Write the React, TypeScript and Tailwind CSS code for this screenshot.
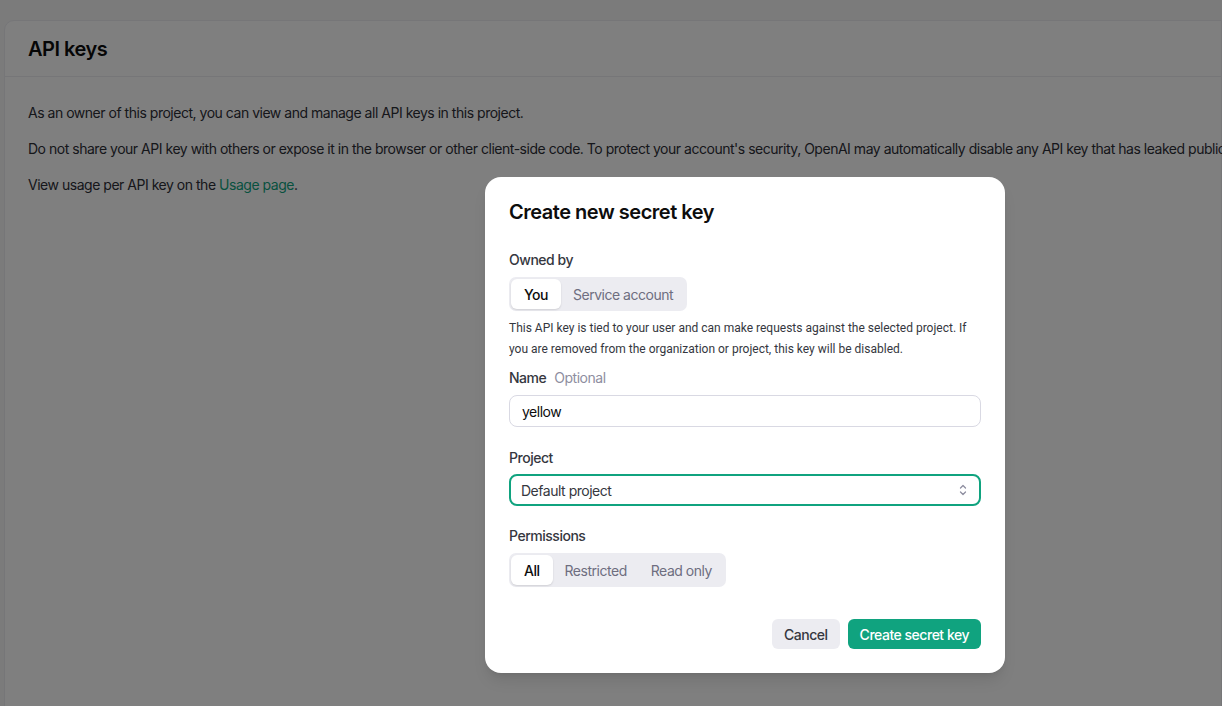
import React from "react";

function Segmented({ items, active }: { items: string[]; active: number }) {
  return (
    <div className="inline-flex items-center rounded-[7px] bg-[#ececf1] p-[2px]">
      {items.map((it, i) => (
        <div
          key={it}
          className={
            i === active
              ? "rounded-[6px] bg-white px-[13px] h-[30px] flex items-center text-[14px] font-medium text-[#0d0d0d] shadow-[0_1px_2px_rgba(0,0,0,0.12)]"
              : "px-[12px] h-[30px] flex items-center text-[14px] text-[#6e6e80]"
          }
        >
          {it}
        </div>
      ))}
    </div>
  );
}

export default function App() {
  return (
    <div
      className="relative h-[706px] w-[1222px] overflow-hidden bg-[#f6f6f7] tracking-[-0.03em]"
      style={{ fontFamily: "Inter, 'Noto Sans', sans-serif" }}
    >
      <div className="pl-[4px] pt-[20px]">
        <div className="h-[720px] rounded-tl-[10px] border border-[#ececf1] bg-white">
          <div className="flex h-[56px] items-center border-b border-[#ececf1] px-[23px]">
            <h1 className="text-[20px] font-semibold text-[#0d0d0d]">API keys</h1>
          </div>
          <div className="flex flex-col gap-[14px] px-[23px] pt-[25px] text-[14px] leading-[22px] text-[#2d2e36] whitespace-nowrap">
            <p>As an owner of this project, you can view and manage all API keys in this project.</p>
            <p>
              Do not share your API key with others or expose it in the browser or other client-side code. To protect your account's security, OpenAI may automatically disable any API key that has leaked publicly.
            </p>
            <p>
              View usage per API key on the <span className="text-[#10a37f]">Usage page</span>.
            </p>
          </div>
        </div>
      </div>

      <div className="absolute inset-0 bg-black/50" />

      <div className="absolute inset-0 flex items-start pl-[485px] pt-[177px]">
        <div className="w-[520px] rounded-[16px] bg-white px-[24px] pt-[23px] pb-[24px] text-[#0d0d0d] shadow-lg">
          <h2 className="text-[20px] font-semibold leading-[24px]">Create new secret key</h2>

          <div className="mt-[26px] text-[14px] font-medium leading-[20px] text-[#353740]">Owned by</div>
          <div className="mt-[7px]">
            <Segmented items={["You", "Service account"]} active={0} />
          </div>
          <p
            className="mt-[7px] text-[12px] leading-[21px] tracking-normal text-[#353740]"
            style={{ fontFamily: "Roboto, sans-serif" }}
          >
            This API key is tied to your user and can make requests against the selected project. If you are removed from the organization or project, this key will be disabled.
          </p>

          <div className="mt-[8px] flex items-center gap-[8px] text-[14px] leading-[20px]">
            <span className="font-medium text-[#353740]">Name</span>
            <span className="text-[#8e8ea0]">Optional</span>
          </div>
          <div className="mt-[7px] flex h-[32px] items-center rounded-[8px] border border-[#d9d9e3] px-[12px] text-[14px] text-[#0d0d0d]">
            yellow
          </div>

          <div className="mt-[21px] text-[14px] font-medium leading-[20px] text-[#353740]">Project</div>
          <div className="mt-[6px] flex h-[32px] items-center justify-between rounded-[8px] border-2 border-[#10a37f] pl-[10px] pr-[11px] text-[14px] text-[#353740]">
            <span>Default project</span>
            <svg width="10" height="14" viewBox="0 0 10 14" fill="none" stroke="#8e8ea0" strokeWidth="1.3" strokeLinecap="round" strokeLinejoin="round">
              <path d="M2.5 5 L5 2.5 L7.5 5" />
              <path d="M2.5 9 L5 11.5 L7.5 9" />
            </svg>
          </div>

          <div className="mt-[20px] text-[14px] font-medium leading-[20px] text-[#353740]">Permissions</div>
          <div className="mt-[7px]">
            <Segmented items={["All", "Restricted", "Read only"]} active={0} />
          </div>

          <div className="mt-[32px] flex justify-end gap-[8px]">
            <button className="h-[30px] rounded-[6px] bg-[#ececf1] px-[12px] text-[14px] font-medium text-[#353740]">
              Cancel
            </button>
            <button className="h-[30px] rounded-[6px] bg-[#10a37f] px-[12px] text-[14px] font-medium text-white">
              Create secret key
            </button>
          </div>
        </div>
      </div>
    </div>
  );
}
